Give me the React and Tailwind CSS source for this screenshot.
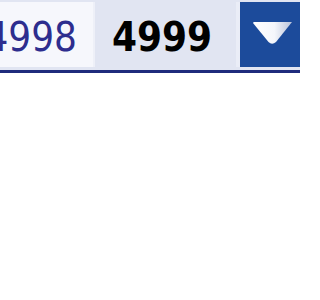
import React from 'react';

const font = { fontFamily: '"DejaVu Sans Condensed", "DejaVu Sans", Verdana, sans-serif' };

const Arrow = () => (
  <svg width="60" height="65" viewBox="0 0 60 65" className="block">
    <defs>
      <linearGradient id="tri" x1="0" y1="0" x2="1" y2="0">
        <stop offset="0" stopColor="#ffffff" />
        <stop offset="0.55" stopColor="#f4f6fb" />
        <stop offset="1" stopColor="#b9c3da" />
      </linearGradient>
    </defs>
    <path d="M13 21 Q13 20 14.5 20 L52 20 L36 40 Q32 43.5 28.5 40 Z" fill="url(#tri)" />
  </svg>
);

const App = () => {
  return (
    <div className="w-[300px] h-[300px] bg-white overflow-hidden" style={font}>
      <div className="flex justify-end overflow-hidden bg-[#e1e5f2] pt-[2px] pb-[3px] border-b-[3px] border-[#1f2b7c]">
        <div className="shrink-0 h-[65px] pr-4 pl-4 pt-[5px] leading-[60px] text-[40px] font-stretch-condensed text-[#2d2d8e] bg-[#f6f7fc]">
          4998
        </div>
        <div className="shrink-0 w-[2px] bg-[#eef0f8]" />
        <div className="shrink-0 w-[141px] h-[65px] pl-[17px] pt-[5px] leading-[60px] text-[40px] font-bold font-stretch-condensed text-black bg-[#e1e5f2]">
          4999
        </div>
        <div className="shrink-0 w-[4px] bg-[#eaedf7]" />
        <div className="shrink-0 w-[60px] h-[65px] bg-[#1c4b9b]">
          <Arrow />
        </div>
      </div>
    </div>
  );
};

export default App;
